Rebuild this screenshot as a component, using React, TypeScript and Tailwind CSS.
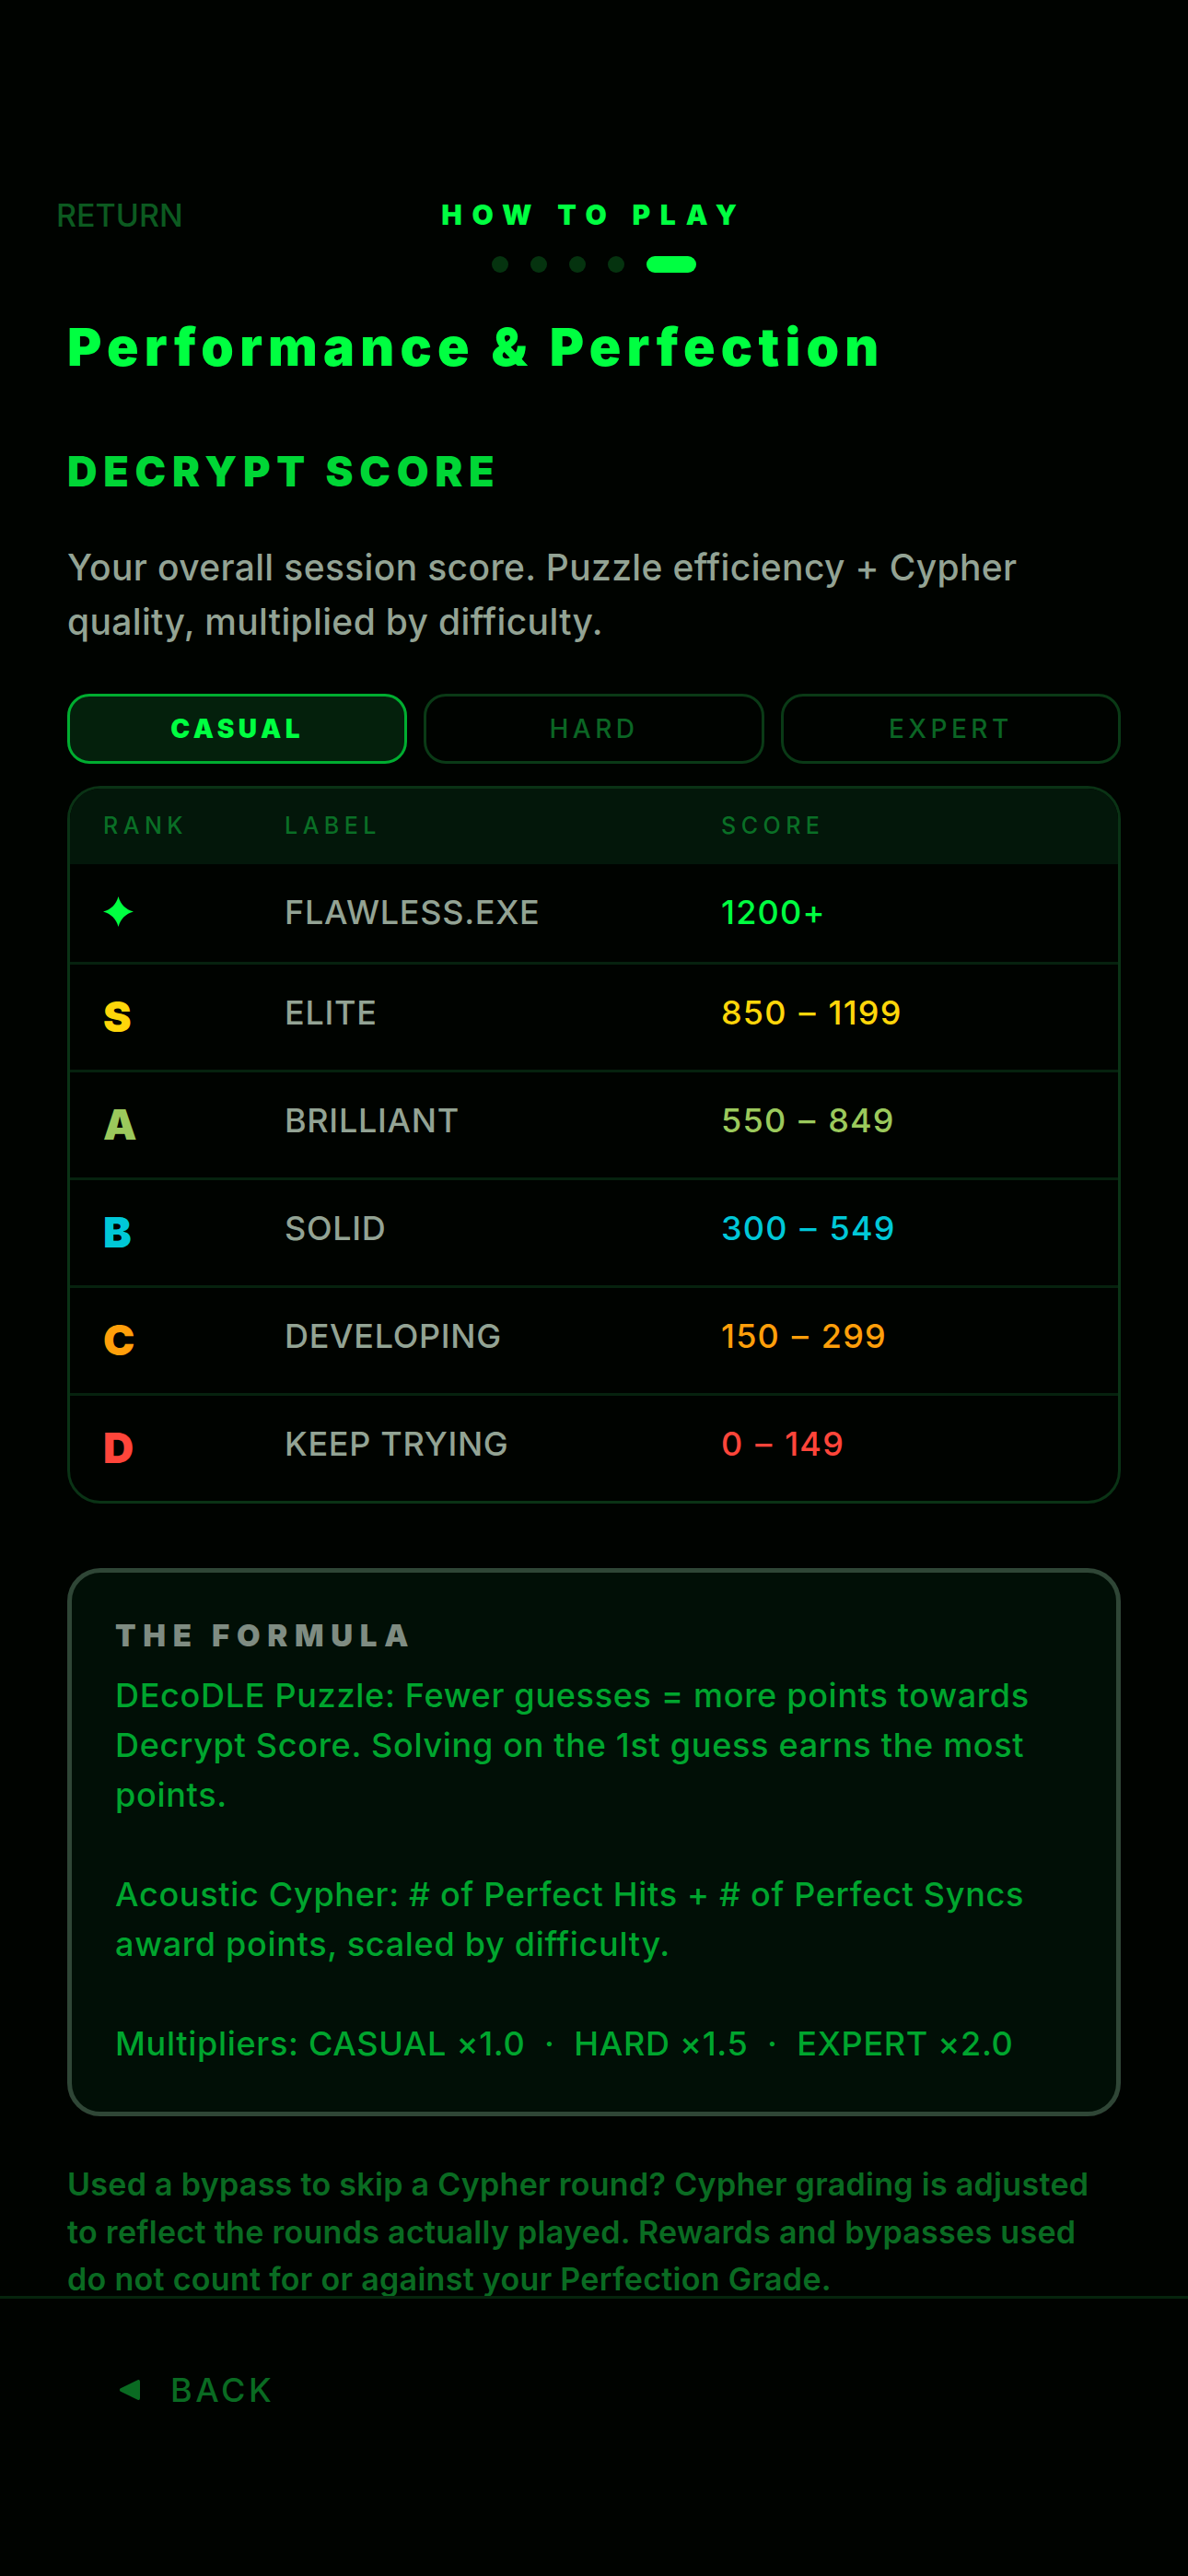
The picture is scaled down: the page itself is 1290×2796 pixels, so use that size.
const ROWS = [
  { rank: "✦", label: "FLAWLESS.EXE", score: "1200+", color: "text-[#00ff41]", star: true },
  { rank: "S", label: "ELITE", score: "850 – 1199", color: "text-[#ffd60a]" },
  { rank: "A", label: "BRILLIANT", score: "550 – 849", color: "text-[#9bc95c]" },
  { rank: "B", label: "SOLID", score: "300 – 549", color: "text-[#00c8d8]" },
  { rank: "C", label: "DEVELOPING", score: "150 – 299", color: "text-[#ff9f0a]" },
  { rank: "D", label: "KEEP TRYING", score: "0 – 149", color: "text-[#ff453a]" },
];

function Tab({ label, active }: { label: string; active?: boolean }) {
  return (
    <div
      className={
        active
          ? "flex h-[76px] flex-1 items-center justify-center rounded-[24px] border-[3px] border-[#00ad30] bg-[#04200c] text-[28px] font-black tracking-[0.16em] text-[#00ff41]"
          : "flex h-[76px] flex-1 items-center justify-center rounded-[24px] border-[3px] border-[#0a3a16] text-[28px] font-medium tracking-[0.16em] text-[#0b6524]"
      }
    >
      {label}
    </div>
  );
}

function ScoreTable() {
  return (
    <div className="mt-[24px] overflow-hidden rounded-[36px] border-[3px] border-[#0a3315]">
      <div className="flex h-[82px] items-center bg-[#03170a] text-[25px] font-medium tracking-[0.22em] text-[#0a6f26]">
        <div className="w-[233px] pl-[36px]">RANK</div>
        <div className="w-[474px]">LABEL</div>
        <div>SCORE</div>
      </div>
      {ROWS.map((row, i) => (
        <div
          key={row.label}
          className={
            i === 0
              ? "flex h-[106px] items-start pt-[25px]"
              : "flex h-[117px] items-start border-t-[3px] border-[#06220e] pt-[25px]"
          }
        >
          {row.star ? (
            <div className="w-[233px] pt-[10px] pl-[36px]">
              <svg width="33" height="33" viewBox="0 0 33 33" className={`fill-current ${row.color}`}>
                <path d="M16.5 0 C19 9 24.5 14 33 16.5 C24.5 19 19 24 16.5 33 C14 24 8.5 19 0 16.5 C8.5 14 14 9 16.5 0 Z" />
              </svg>
            </div>
          ) : (
            <div className={`-mt-[2px] w-[233px] pl-[36px] text-[46px] leading-[66px] font-black ${row.color}`}>
              {row.rank}
            </div>
          )}
          <div className="w-[474px] text-[36px] leading-[54px] font-medium tracking-[0.7px] text-[#93a394]">
            {row.label}
          </div>
          <div className={`text-[36px] leading-[54px] font-medium tracking-[1.2px] [word-spacing:2px] ${row.color}`}>
            {row.score}
          </div>
        </div>
      ))}
    </div>
  );
}

export default function App() {
  return (
    <div className="flex h-[2796px] flex-col overflow-hidden bg-[#000300] font-['Inter',sans-serif]">
      <div className="relative h-[2492px] overflow-hidden px-[73px]">
        <div className="absolute top-[212px] left-[61px] text-[34px] leading-[44px] font-medium text-[#0c5a20]">
          RETURN
        </div>
        <div className="pt-[216px] text-center text-[30px] leading-[34px] font-black tracking-[0.36em] text-[#00ff41]">
          HOW TO PLAY
        </div>
        <div className="mt-[28px] flex justify-center gap-[24px]">
          <span className="h-[18px] w-[18px] rounded-full bg-[#05330f]" />
          <span className="h-[18px] w-[18px] rounded-full bg-[#05330f]" />
          <span className="h-[18px] w-[18px] rounded-full bg-[#05330f]" />
          <span className="h-[18px] w-[18px] rounded-full bg-[#05330f]" />
          <span className="h-[18px] w-[54px] rounded-full bg-[#00ff41]" />
        </div>
        <h1 className="mt-[45px] text-[57px] leading-[72px] font-black tracking-[6.2px] text-[#00ff41]">
          Performance &amp; Perfection
        </h1>
        <h2 className="mt-[69px] text-[45px] leading-[60px] font-black tracking-[0.15em] text-[#00d636]">
          DECRYPT SCORE
        </h2>
        <p className="mt-[44px] text-[39px] leading-[59px] font-medium tracking-[0.35px] text-[#93a394]">
          Your overall session score. Puzzle efficiency + Cypher quality, multiplied by difficulty.
        </p>
        <div className="mt-[49px] flex gap-[18px]">
          <Tab label="CASUAL" active />
          <Tab label="HARD" />
          <Tab label="EXPERT" />
        </div>
        <ScoreTable />
        <div className="mt-[70px] rounded-[36px] border-[5px] border-[#2f4636] bg-[#010f06] px-[47px] pt-[48px] pb-[47px]">
          <div className="text-[33px] leading-[40px] font-black tracking-[7.7px] text-[#7f8c82]">THE FORMULA</div>
          <div className="mt-[18px] text-[36px] leading-[54px] font-medium tracking-[0.7px] whitespace-pre-wrap text-[#00a52e]">
            {"DEcoDLE Puzzle: Fewer guesses = more points towards Decrypt Score. Solving on the 1st guess earns the most points.\n\nAcoustic Cypher: # of Perfect Hits + # of Perfect Syncs award points, scaled by difficulty.\n\nMultipliers: CASUAL ×1.0  ·  HARD ×1.5  ·  EXPERT ×2.0"}
          </div>
        </div>
        <p className="mt-[48px] text-[34px] leading-[51.5px] font-semibold tracking-[0.3px] text-[#0a6b22]">
          Used a bypass to skip a Cypher round? Cypher grading is adjusted to reflect the rounds actually played. Rewards and bypasses used do not count for or against your Perfection Grade.
        </p>
      </div>
      <div className="flex-1 border-t-[3px] border-[#06240d] px-[129px] pt-[75px]">
        <div className="flex items-center gap-[33px] text-[36px] leading-[48px] font-medium tracking-[0.1em] text-[#0a6b22]">
          <svg width="23" height="24" viewBox="0 0 23 24" fill="currentColor">
            <path d="M21 1 L1.5 10.5 Q0 12 1.5 13.5 L21 23 Q23 23.5 23 21 L23 3 Q23 .5 21 1 Z" />
          </svg>
          <span>BACK</span>
        </div>
      </div>
    </div>
  );
}
